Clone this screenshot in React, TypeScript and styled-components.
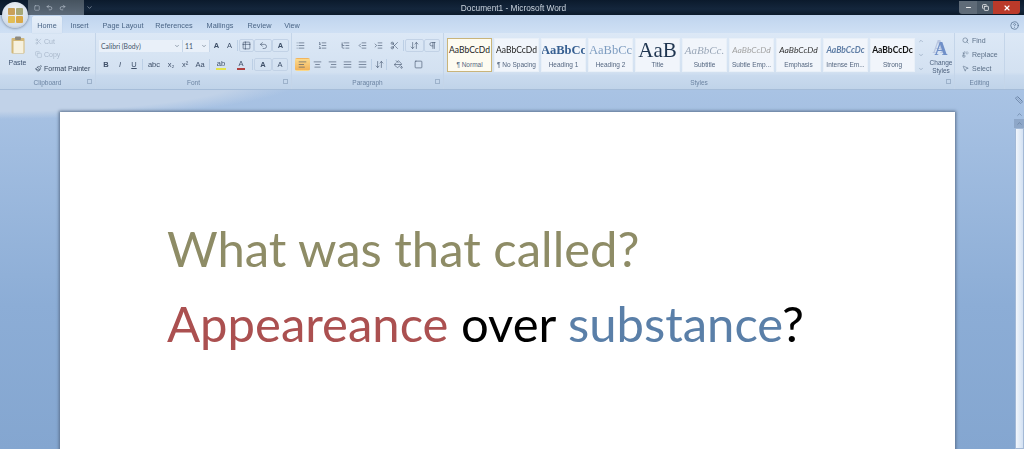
import styled, { createGlobalStyle } from "styled-components";
import {
  AlignCenter,
  AlignJustify,
  AlignLeft,
  AlignRight,
  ArrowDownUp,
  ChevronDown,
  ChevronUp,
  Copy,
  HelpCircle,
  IndentDecrease,
  IndentIncrease,
  List,
  ListOrdered,
  ListTree,
  Minus,
  MousePointer2,
  PaintBucket,
  Paintbrush,
  Pilcrow,
  Redo2,
  Replace,
  Ruler,
  Scissors,
  Search,
  Square,
  Table2,
  Undo2,
  X,
} from "lucide-react";

const GlobalStyle = createGlobalStyle`
  html, body {
    margin: 0;
    padding: 0;
    width: 1024px;
    height: 449px;
    overflow: hidden;
    font-family: "Liberation Sans", Arial, sans-serif;
  }
`;

const Window = styled.div`
  width: 1024px;
  height: 449px;
  display: flex;
  flex-direction: column;
  position: relative;
  overflow: hidden;
`;

const TitleBar = styled.div`
  height: 15px;
  flex: none;
  display: flex;
  align-items: center;
  background: linear-gradient(180deg, #0b1a2c, #14263c 60%, #0c1a2a);
  position: relative;
  padding-left: 28px;
`;

const QuickAccess = styled.div`
  width: 56px;
  height: 15px;
  display: flex;
  align-items: center;
  padding-left: 6px;
  gap: 6px;
  box-sizing: border-box;
  background: linear-gradient(180deg, #46535f, #5c6a79);
  color: #c3ccd8;
  filter: blur(0.4px);
`;

const QuickArrow = styled.span`
  margin-left: 2px;
  color: #aab6c4;
  display: flex;
`;

const TitleText = styled.div`
  position: absolute;
  left: 0;
  right: 0;
  top: 0;
  text-align: center;
  padding-left: 3px;
  font-size: 8.3px;
  line-height: 16px;
  color: #c9d2dc;
  filter: blur(0.4px);
`;

const WindowControls = styled.div`
  margin-left: auto;
  margin-right: 4px;
  width: 61px;
  height: 13px;
  display: flex;
  border-radius: 0 0 3px 3px;
  overflow: hidden;
  filter: blur(0.3px);
`;

const WindowControl = styled.div<{ $bg: string; $w: number }>`
  width: ${(p) => p.$w}px;
  display: flex;
  align-items: center;
  justify-content: center;
  background: ${(p) => p.$bg};
  color: #fff;
`;

const OfficeButton = styled.div`
  position: absolute;
  left: 2px;
  top: 2px;
  width: 26px;
  height: 26px;
  border-radius: 50%;
  background: radial-gradient(circle at 50% 35%, #f4f6f8, #d2dce8 70%, #9aa6b5);
  box-shadow: 0 0 3px rgba(10, 20, 40, 0.6);
  display: flex;
  align-items: center;
  justify-content: center;
  filter: blur(0.5px);
`;

const OfficeLogo = styled.div`
  width: 15px;
  height: 15px;
  display: grid;
  grid-template-columns: 1fr 1fr;
  gap: 1px;
`;

const OfficeLogoCell = styled.span<{ $c: string }>`
  background: ${(p) => p.$c};
  border-radius: 1px;
`;

const TabRow = styled.div`
  height: 18px;
  flex: none;
  display: flex;
  align-items: flex-end;
  padding-left: 32px;
  background: linear-gradient(180deg, #bfd4ee, #cfe0f4);
`;

const Tab = styled.div<{ $active?: boolean; $w: number }>`
  width: ${(p) => p.$w}px;
  height: 17px;
  padding-top: 2px;
  box-sizing: border-box;
  display: flex;
  align-items: center;
  justify-content: center;
  font-size: 7.3px;
  color: #4a6586;
  filter: blur(0.4px);
  background: ${(p) =>
    p.$active ? "linear-gradient(180deg, #e6eff9, #dbe7f5)" : "transparent"};
  border-radius: 2px 2px 0 0;
  box-shadow: ${(p) => (p.$active ? "0 0 1px #9db4d0" : "none")};
`;

const HelpIcon = styled.div`
  margin-left: auto;
  margin-right: 5px;
  margin-bottom: 3px;
  color: #56708f;
  display: flex;
  filter: blur(0.4px);
`;

const Ribbon = styled.div`
  height: 57px;
  flex: none;
  display: flex;
  background: linear-gradient(180deg, #dce8f6, #d3e1f1 70%, #c9daee 76%, #c0d3e9);
  border-bottom: 1px solid #a5bcd8;
  box-sizing: border-box;
`;

const Group = styled.div<{ $w: number }>`
  width: ${(p) => p.$w}px;
  flex: none;
  display: flex;
  flex-direction: column;
  border-right: 1px solid #c4d5e9;
  box-sizing: border-box;
`;

const GroupBody = styled.div`
  flex: 1;
  min-height: 0;
  display: flex;
  filter: blur(0.4px);
`;

const GroupLabel = styled.div`
  height: 14px;
  flex: none;
  display: flex;
  align-items: center;
  justify-content: center;
  position: relative;
  font-size: 6.5px;
  color: #6c84a2;
  filter: blur(0.45px);
`;

const Launcher = styled.span`
  position: absolute;
  right: 3px;
  top: 4px;
  width: 5px;
  height: 5px;
  border: 1px solid #9db2cb;
  box-sizing: border-box;
`;

const PasteColumn = styled.div`
  width: 35px;
  display: flex;
  flex-direction: column;
  align-items: center;
  padding-top: 3px;
  font-size: 7px;
  color: #3f5370;
`;

const PasteIcon = styled.svg`
  width: 14px;
  height: 18px;
  margin-bottom: 5px;
`;

const ClipColumn = styled.div`
  display: flex;
  flex-direction: column;
  gap: 3px;
  padding-top: 3px;
`;

const ClipItem = styled.div<{ $muted?: boolean }>`
  height: 10.5px;
  display: flex;
  align-items: center;
  gap: 2px;
  font-size: 7px;
  white-space: nowrap;
  color: ${(p) => (p.$muted ? "#a9b8cb" : "#36465c")};
`;

const ToolColumn = styled.div<{ $pl: number }>`
  flex: 1;
  display: flex;
  flex-direction: column;
  gap: 6px;
  padding: 6px 0 0 ${(p) => p.$pl}px;
`;

const ToolRow = styled.div<{ $pl?: number }>`
  height: 13px;
  display: flex;
  align-items: center;
  padding-left: ${(p) => p.$pl ?? 0}px;
`;

const FontBox = styled.div<{ $w: number }>`
  width: ${(p) => p.$w}px;
  height: 12px;
  flex: none;
  display: flex;
  align-items: center;
  justify-content: space-between;
  padding: 0 2px;
  box-sizing: border-box;
  background: #e9f0f9;
  font-size: 6.8px;
  color: #45556b;
  font-family: "Lato", sans-serif;
  border-right: 1px solid #c6d6e9;
`;

const Tool = styled.div<{
  $w?: number;
  $active?: boolean;
  $framed?: boolean;
  $bold?: boolean;
  $italic?: boolean;
  $under?: boolean;
}>`
  width: ${(p) => p.$w ?? 15}px;
  height: 13px;
  flex: none;
  display: flex;
  align-items: center;
  justify-content: center;
  font-size: 7.5px;
  font-weight: ${(p) => (p.$bold ? 700 : 400)};
  font-style: ${(p) => (p.$italic ? "italic" : "normal")};
  text-decoration: ${(p) => (p.$under ? "underline" : "none")};
  color: #3e4f68;
  background: ${(p) =>
    p.$active ? "linear-gradient(180deg, #fbd98c, #f2b35a)" : "transparent"};
  box-sizing: border-box;
  border: ${(p) => (p.$framed ? "1px solid #c2d2e6" : "1px solid transparent")};
  border-radius: 2px;
`;

const Swatch = styled.span<{ $c: string }>`
  display: block;
  border-bottom: 2px solid ${(p) => p.$c};
  line-height: 8px;
  padding: 0 1px;
`;

const Sep = styled.span`
  width: 1px;
  height: 11px;
  margin: 0 1px;
  background: #bccfe5;
  flex: none;
`;

const StylesBody = styled.div`
  flex: 1;
  display: flex;
  gap: 2px;
  padding: 5px 0 0 3px;
`;

const StyleTile = styled.div<{ $active?: boolean }>`
  width: 45px;
  height: 34px;
  flex: none;
  box-sizing: border-box;
  display: flex;
  flex-direction: column;
  align-items: center;
  overflow: hidden;
  background: ${(p) => (p.$active ? "#fdfbf1" : "#f1f5fb")};
  border: ${(p) => (p.$active ? "1.5px solid #c9b47a" : "1px solid #e9f0f8")};
`;

const Sample = styled.div<{
  $font: string;
  $size: number;
  $c: string;
  $bold?: boolean;
  $italic?: boolean;
}>`
  height: 22px;
  display: flex;
  align-items: center;
  white-space: nowrap;
  font-family: ${(p) => p.$font};
  font-size: ${(p) => p.$size}px;
  color: ${(p) => p.$c};
  font-weight: ${(p) => (p.$bold ? 700 : 400)};
  font-style: ${(p) => (p.$italic ? "italic" : "normal")};
`;

const TileLabel = styled.div`
  font-size: 6.5px;
  line-height: 8px;
  white-space: nowrap;
  color: #53657f;
`;

const Scroller = styled.div`
  width: 8px;
  height: 34px;
  display: flex;
  flex-direction: column;
  justify-content: space-between;
  align-items: center;
  color: #7a90ab;
`;

const ChangeStyles = styled.div`
  width: 28px;
  display: flex;
  flex-direction: column;
  align-items: center;
  font-size: 6.5px;
  line-height: 8px;
  text-align: center;
  color: #4a5f7c;
`;

const BigA = styled.div`
  height: 20px;
  margin-top: 1px;
  font-size: 18px;
  line-height: 20px;
  font-weight: 700;
  color: #6f8fc8;
  text-shadow: -2px -2px 0 #b9c6e0;
  font-family: "Liberation Serif", serif;
`;

const EditColumn = styled.div`
  display: flex;
  flex-direction: column;
  gap: 3px;
  padding: 2px 0 0 7px;
`;

const EditItem = styled.div`
  height: 11px;
  display: flex;
  align-items: center;
  gap: 3px;
  font-size: 7px;
  color: #5c7088;
  white-space: nowrap;
`;

const RibbonRest = styled.div`
  flex: 1;
`;

const Workspace = styled.div`
  flex: 1;
  min-height: 0;
  display: flex;
  background:
    radial-gradient(ellipse 300px 39px at 0 -10px, #c1d2e8 80%, transparent 100%),
    linear-gradient(180deg, #a9c3e4, #8cadd6 60%, #84a6d0);
`;

const PageArea = styled.div`
  flex: 1;
  padding: 22px 0 0 60px;
`;

const Page = styled.div`
  width: 895px;
  height: 400px;
  box-sizing: border-box;
  padding: 99px 0 0 107px;
  background: #fff;
  box-shadow: 0 0 3px 1px #5a6f8c;
  font-family: "Lato", "Liberation Sans", sans-serif;
  font-size: 49px;
  line-height: 75px;
  filter: blur(0.4px);
`;

const Line = styled.div`
  white-space: nowrap;
  color: #000;
`;

const Colored = styled.span<{ $c: string }>`
  color: ${(p) => p.$c};
`;

const ScrollBar = styled.div`
  width: 10px;
  flex: none;
  display: flex;
  flex-direction: column;
  align-items: center;
  color: #5a7394;
  filter: blur(0.4px);
`;

const ScrollCap = styled.div<{ $h: number; $dark?: boolean }>`
  height: ${(p) => p.$h}px;
  flex: none;
  width: 100%;
  display: flex;
  align-items: center;
  justify-content: center;
  background: ${(p) => (p.$dark ? "#8ea7c8" : "transparent")};
`;

const ScrollThumb = styled.div`
  flex: 1;
  width: 9px;
  margin-left: 1px;
  background: linear-gradient(90deg, #f1f6fc, #d3e1f2);
  border: 1px solid #a3b9d6;
  box-sizing: border-box;
`;

const styleTiles = [
  { s: "AaBbCcDd", l: "¶ Normal", f: "Lato, sans-serif", z: 8.5, c: "#222", active: true },
  { s: "AaBbCcDd", l: "¶ No Spacing", f: "Lato, sans-serif", z: 8.5, c: "#222" },
  { s: "AaBbCc", l: "Heading 1", f: "'Liberation Serif', serif", z: 12.5, c: "#365f91", b: true },
  { s: "AaBbCc", l: "Heading 2", f: "'Liberation Serif', serif", z: 12.5, c: "#7d9cc0" },
  { s: "AaB", l: "Title", f: "'Liberation Serif', serif", z: 21, c: "#1f3550" },
  { s: "AaBbCc.", l: "Subtitle", f: "'Liberation Serif', serif", z: 11, c: "#9aa7b8", i: true },
  { s: "AaBbCcDd", l: "Subtle Emp...", f: "Lato, sans-serif", z: 8.5, c: "#a3a3a3", i: true },
  { s: "AaBbCcDd", l: "Emphasis", f: "Lato, sans-serif", z: 8.5, c: "#333", i: true },
  { s: "AaBbCcDc", l: "Intense Em...", f: "Lato, sans-serif", z: 8.5, c: "#5f7ea6", b: true, i: true },
  { s: "AaBbCcDc", l: "Strong", f: "Lato, sans-serif", z: 8.5, c: "#111", b: true },
];

const ico = { size: 9, strokeWidth: 1.6 };

export default function App() {
  return (
    <Window>
      <GlobalStyle />
      <TitleBar>
        <QuickAccess>
          <Square size={6} />
          <Undo2 size={7} />
          <Redo2 size={7} />
        </QuickAccess>
        <QuickArrow>
          <ChevronDown size={7} />
        </QuickArrow>
        <TitleText>Document1 - Microsoft Word</TitleText>
        <WindowControls>
          <WindowControl $bg="#5f6b78" $w={18}>
            <Minus size={7} strokeWidth={3} />
          </WindowControl>
          <WindowControl $bg="#4a5866" $w={16}>
            <Copy size={7} strokeWidth={2.5} />
          </WindowControl>
          <WindowControl $bg="#bb3a2a" $w={27}>
            <X size={8} strokeWidth={3.5} />
          </WindowControl>
        </WindowControls>
      </TitleBar>

      <OfficeButton>
        <OfficeLogo>
          <OfficeLogoCell $c="#c9a05a" />
          <OfficeLogoCell $c="#a7a877" />
          <OfficeLogoCell $c="#e2bd55" />
          <OfficeLogoCell $c="#d9a848" />
        </OfficeLogo>
      </OfficeButton>

      <TabRow>
        <Tab $active $w={30}>Home</Tab>
        <Tab $w={35}>Insert</Tab>
        <Tab $w={52}>Page Layout</Tab>
        <Tab $w={50}>References</Tab>
        <Tab $w={42}>Mailings</Tab>
        <Tab $w={37}>Review</Tab>
        <Tab $w={28}>View</Tab>
        <HelpIcon>
          <HelpCircle size={9} />
        </HelpIcon>
      </TabRow>

      <Ribbon>
        <Group $w={96}>
          <GroupBody>
            <PasteColumn>
              <PasteIcon viewBox="0 0 14 18">
                <rect x="0.5" y="2" width="13" height="15.5" rx="1" fill="#d3b878" />
                <rect x="4" y="0.5" width="6" height="3.5" rx="1" fill="#8d8a80" />
                <rect x="2.5" y="5" width="10" height="12" fill="#f6f1df" />
              </PasteIcon>
              Paste
            </PasteColumn>
            <ClipColumn>
              <ClipItem $muted>
                <Scissors size={7} /> Cut
              </ClipItem>
              <ClipItem $muted>
                <Copy size={7} /> Copy
              </ClipItem>
              <ClipItem>
                <Paintbrush size={7} /> Format Painter
              </ClipItem>
            </ClipColumn>
          </GroupBody>
          <GroupLabel>
            Clipboard
            <Launcher />
          </GroupLabel>
        </Group>

        <Group $w={196}>
          <GroupBody>
            <ToolColumn $pl={3}>
              <ToolRow>
                <FontBox $w={84}>
                  Calibri (Body)
                  <ChevronDown size={6} />
                </FontBox>
                <FontBox $w={27}>
                  11
                  <ChevronDown size={6} />
                </FontBox>
                <Tool $w={13} $bold>A</Tool>
                <Tool $w={13}>A</Tool>
                <Sep />
                <Tool $framed>
                  <Table2 {...ico} />
                </Tool>
                <Tool $w={18} $framed>
                  <Undo2 {...ico} />
                </Tool>
                <Tool $w={17} $framed $bold>A</Tool>
              </ToolRow>
              <ToolRow>
                <Tool $w={14} $bold>B</Tool>
                <Tool $w={14} $italic>I</Tool>
                <Tool $w={14} $under>U</Tool>
                <Sep />
                <Tool $w={20}>abc</Tool>
                <Tool $w={14}>x₂</Tool>
                <Tool $w={14}>x²</Tool>
                <Tool $w={16}>Aa</Tool>
                <Sep />
                <Tool $w={20}>
                  <Swatch $c="#e3e34a">ab</Swatch>
                </Tool>
                <Tool $w={20}>
                  <Swatch $c="#b04040">A</Swatch>
                </Tool>
                <Sep />
                <Tool $w={18} $framed $bold>A</Tool>
                <Tool $w={16} $framed>A</Tool>
              </ToolRow>
            </ToolColumn>
          </GroupBody>
          <GroupLabel>
            Font
            <Launcher />
          </GroupLabel>
        </Group>

        <Group $w={152}>
          <GroupBody>
            <ToolColumn $pl={0}>
              <ToolRow>
                <Tool $w={16}>
                  <List {...ico} />
                </Tool>
                <Tool $w={28}>
                  <ListOrdered {...ico} />
                </Tool>
                <Tool $w={18}>
                  <ListTree {...ico} />
                </Tool>
                <Tool $w={16}>
                  <IndentDecrease {...ico} />
                </Tool>
                <Tool $w={16}>
                  <IndentIncrease {...ico} />
                </Tool>
                <Tool $w={16}>
                  <Scissors {...ico} />
                </Tool>
                <Sep />
                <Tool $w={19} $framed>
                  <ArrowDownUp {...ico} />
                </Tool>
                <Tool $w={16} $framed>
                  <Pilcrow {...ico} />
                </Tool>
              </ToolRow>
              <ToolRow $pl={3}>
                <Tool $active>
                  <AlignLeft {...ico} />
                </Tool>
                <Tool>
                  <AlignCenter {...ico} />
                </Tool>
                <Tool>
                  <AlignRight {...ico} />
                </Tool>
                <Tool>
                  <AlignJustify {...ico} />
                </Tool>
                <Tool>
                  <AlignJustify {...ico} />
                </Tool>
                <Sep />
                <Tool $w={12}>
                  <ArrowDownUp {...ico} />
                </Tool>
                <Sep />
                <Tool $w={20}>
                  <PaintBucket {...ico} />
                </Tool>
                <Tool $w={20}>
                  <Square {...ico} />
                </Tool>
              </ToolRow>
            </ToolColumn>
          </GroupBody>
          <GroupLabel>
            Paragraph
            <Launcher />
          </GroupLabel>
        </Group>

        <Group $w={511}>
          <GroupBody>
            <StylesBody>
              {styleTiles.map((t) => (
                <StyleTile key={t.l} $active={t.active}>
                  <Sample $font={t.f} $size={t.z} $c={t.c} $bold={t.b} $italic={t.i}>
                    {t.s}
                  </Sample>
                  <TileLabel>{t.l}</TileLabel>
                </StyleTile>
              ))}
              <Scroller>
                <ChevronUp size={6} />
                <ChevronDown size={6} />
                <ChevronDown size={6} />
              </Scroller>
              <ChangeStyles>
                <BigA>A</BigA>
                Change
                <br />
                Styles
              </ChangeStyles>
            </StylesBody>
          </GroupBody>
          <GroupLabel>
            Styles
            <Launcher />
          </GroupLabel>
        </Group>

        <Group $w={50}>
          <GroupBody>
            <EditColumn>
              <EditItem>
                <Search size={7} /> Find
              </EditItem>
              <EditItem>
                <Replace size={7} /> Replace
              </EditItem>
              <EditItem>
                <MousePointer2 size={7} /> Select
              </EditItem>
            </EditColumn>
          </GroupBody>
          <GroupLabel>Editing</GroupLabel>
        </Group>
        <RibbonRest />
      </Ribbon>

      <Workspace>
        <PageArea>
          <Page>
            <Line>
              <Colored $c="#8e8c66">What was that called?</Colored>
            </Line>
            <Line>
              <Colored $c="#ab5050">Appeareance</Colored> over{" "}
              <Colored $c="#5a7fa8">substance</Colored>?
            </Line>
          </Page>
        </PageArea>
        <ScrollBar>
          <ScrollCap $h={20}>
            <Ruler size={8} />
          </ScrollCap>
          <ScrollCap $h={9}>
            <ChevronUp size={7} />
          </ScrollCap>
          <ScrollCap $h={9} $dark>
            <ChevronUp size={7} />
          </ScrollCap>
          <ScrollThumb />
        </ScrollBar>
      </Workspace>
    </Window>
  );
}
